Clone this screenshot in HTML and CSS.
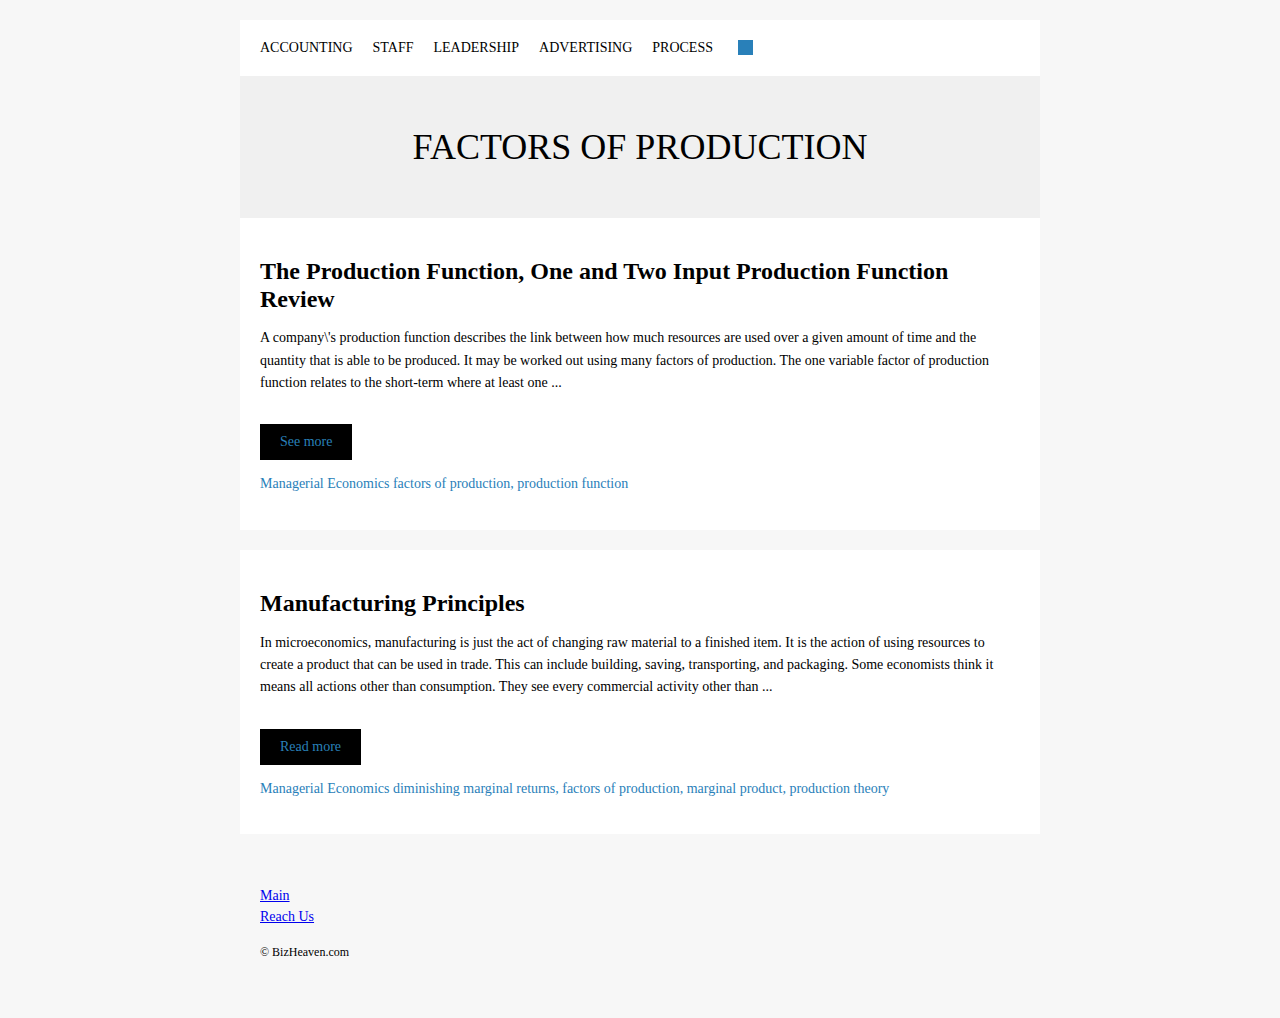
FILE: index.html
```html
<!DOCTYPE html>
<html lang="en">
<head>
<meta charset="utf-8">
<title>Factors of Production</title>
<link rel="stylesheet" href="styles.css">
</head>
<body>
<div class="page">
  <nav class="nav">
    <a href="#">ACCOUNTING</a>
    <a href="#">STAFF</a>
    <a href="#">LEADERSHIP</a>
    <a href="#">ADVERTISING</a>
    <a href="#">PROCESS</a>
    <span class="square"></span>
  </nav>
  <header class="hero">
    <h1>FACTORS OF PRODUCTION</h1>
  </header>
  <article class="card">
    <h2>The Production Function, One and Two Input Production Function Review</h2>
    <p>A company\'s production function describes the link between how much resources are used over a given amount of time and the quantity that is able to be produced. It may be worked out using many factors of production. The one variable factor of production function relates to the short-term where at least one ...</p>
    <a class="btn" href="#">See more</a>
    <div class="tags">Managerial Economics factors of production, production function</div>
  </article>
  <article class="card">
    <h2>Manufacturing Principles</h2>
    <p>In microeconomics, manufacturing is just the act of changing raw material to a finished item. It is the action of using resources to create a product that can be used in trade. This can include building, saving, transporting, and packaging. Some economists think it means all actions other than consumption. They see every commercial activity other than ...</p>
    <a class="btn" href="#">Read more</a>
    <div class="tags">Managerial Economics diminishing marginal returns, factors of production, marginal product, production theory</div>
  </article>
  <footer class="footer">
    <a href="#">Main</a>
    <a href="#">Reach Us</a>
    <div class="copy">© BizHeaven.com</div>
  </footer>
</div>
</body>
</html>
```

FILE: styles.css
```css
html, body {
  margin: 0;
  padding: 0;
}
body {
  background: #f7f7f7;
  font-family: "Liberation Serif", "Times New Roman", serif;
  color: #000;
}
.page {
  width: 800px;
  margin: 0 auto;
  padding-top: 20px;
}
.nav {
  background: #fff;
  height: 56px;
  padding: 0 20px;
  display: flex;
  align-items: center;
  gap: 20px;
  font-size: 14px;
}
.nav a {
  color: #000;
  text-decoration: none;
  line-height: 20px;
}
.square {
  width: 15px;
  height: 15px;
  background: #2980b9;
  margin-left: 5px;
  margin-top: -1px;
}
.hero {
  background: #f0f0f0;
  padding: 50px 20px;
  text-align: center;
}
.hero h1 {
  margin: 0;
  font-size: 36px;
  font-weight: normal;
  line-height: 42px;
}
.card {
  background: #fff;
  padding: 40px 20px 36.5px;
  margin-bottom: 20px;
}
.card h2 {
  margin: 0 0 14px;
  font-size: 24px;
  line-height: 27.6px;
  font-weight: bold;
}
.card p {
  margin: 0 0 30px;
  font-size: 14px;
  line-height: 22.4px;
}
.btn {
  display: inline-block;
  background: #000;
  color: #2980b9;
  font-size: 14px;
  height: 36px;
  line-height: 36px;
  padding: 0 20px;
  text-decoration: none;
}
.tags {
  margin-top: 15px;
  font-size: 14px;
  line-height: 18px;
  color: #2980b9;
}
.footer {
  padding: 30.5px 20px 50px;
  display: flex;
  flex-direction: column;
  align-items: flex-start;
}
.footer a {
  font-size: 14px;
  line-height: 21px;
  color: #00e;
  text-decoration: underline;
}
.copy {
  margin-top: 17px;
  font-size: 12px;
  line-height: 16px;
}
```
